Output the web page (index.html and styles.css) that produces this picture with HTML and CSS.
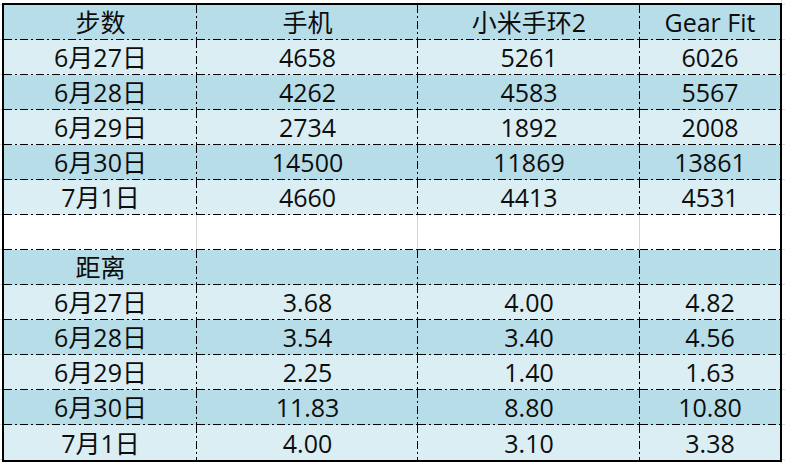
FILE: index.html
```html
<!DOCTYPE html>
<html lang="zh">
<head>
<meta charset="utf-8">
<link rel="stylesheet" href="styles.css">
</head>
<body>
<table class="sheet">
  <colgroup>
    <col class="c1"><col class="c2"><col class="c3"><col class="c4">
  </colgroup>
  <tbody>
    <tr class="dark"><td>步数</td><td>手机</td><td>小米手环2</td><td>Gear Fit</td></tr>
    <tr class="light"><td>6月27日</td><td>4658</td><td>5261</td><td>6026</td></tr>
    <tr class="dark"><td>6月28日</td><td>4262</td><td>4583</td><td>5567</td></tr>
    <tr class="light"><td>6月29日</td><td>2734</td><td>1892</td><td>2008</td></tr>
    <tr class="dark"><td>6月30日</td><td>14500</td><td>11869</td><td>13861</td></tr>
    <tr class="light"><td>7月1日</td><td>4660</td><td>4413</td><td>4531</td></tr>
    <tr class="blank"><td></td><td></td><td></td><td></td></tr>
    <tr class="dark"><td>距离</td><td></td><td></td><td></td></tr>
    <tr class="light"><td>6月27日</td><td>3.68</td><td>4.00</td><td>4.82</td></tr>
    <tr class="dark"><td>6月28日</td><td>3.54</td><td>3.40</td><td>4.56</td></tr>
    <tr class="light"><td>6月29日</td><td>2.25</td><td>1.40</td><td>1.63</td></tr>
    <tr class="dark"><td>6月30日</td><td>11.83</td><td>8.80</td><td>10.80</td></tr>
    <tr class="light last"><td>7月1日</td><td>4.00</td><td>3.10</td><td>3.38</td></tr>
  </tbody>
</table>
</body>
</html>
```

FILE: styles.css
```css
html, body {
  height: 100%;
}
body {
  margin: 0;
  background:
    linear-gradient(#d9d9d9, #d9d9d9) 781px 0 / 1px 100% no-repeat,
    linear-gradient(to bottom, transparent 34px, #dcdcdc 34px) 0 5px / 100% 35px repeat;
  background-color: #fff;
  font-family: "Open Sans", "Noto Sans CJK SC", sans-serif;
  color: #0d0d0d;
  overflow: hidden;
}
.sheet {
  --dash: #000;
  --h: repeating-linear-gradient(to right, var(--dash) 0 8px, transparent 8px 11px, var(--dash) 11px 13px, transparent 13px 16px);
  --v: repeating-linear-gradient(to bottom, var(--dash) 0 8px, transparent 8px 11px, var(--dash) 11px 13px, transparent 13px 16px);
  margin: 3px 0 0 2px;
  border: 2px solid #000;
  border-collapse: separate;
  border-spacing: 0;
  table-layout: fixed;
  width: 780px;
  background: #fff;
}
.c1 { width: 193px; }
.c2 { width: 221px; }
.c3 { width: 222px; }
.c4 { width: 140px; }
.sheet tr {
  height: 35px;
}
.sheet td {
  padding: 0 0 1px 0;
  height: 35px;
  box-sizing: border-box;
  text-align: center;
  vertical-align: middle;
  font-size: 25px;
  font-weight: 400;
  line-height: 30px;
  white-space: nowrap;
  background:
    var(--h) left bottom / 100% 1px no-repeat,
    var(--v) right top / 1px 100% no-repeat,
    var(--bg);
}
.sheet td:last-child {
  background:
    var(--h) left bottom / 100% 1px no-repeat,
    var(--bg);
}
.dark { --bg: #b7dde8; }
.light { --bg: #daeef3; }
.blank { --bg: #fff; }
.sheet .blank td {
  background:
    var(--h) left bottom / 100% 1px no-repeat,
    linear-gradient(#d4d4d4, #d4d4d4) right top / 1px 100% no-repeat,
    var(--bg);
}
.sheet .blank td:last-child {
  background:
    var(--h) left bottom / 100% 1px no-repeat,
    var(--bg);
}
.sheet .last td {
  padding-bottom: 0;
  background:
    var(--v) right top / 1px 100% no-repeat,
    var(--bg);
}
.sheet .last td:last-child {
  background: var(--bg);
}
```
